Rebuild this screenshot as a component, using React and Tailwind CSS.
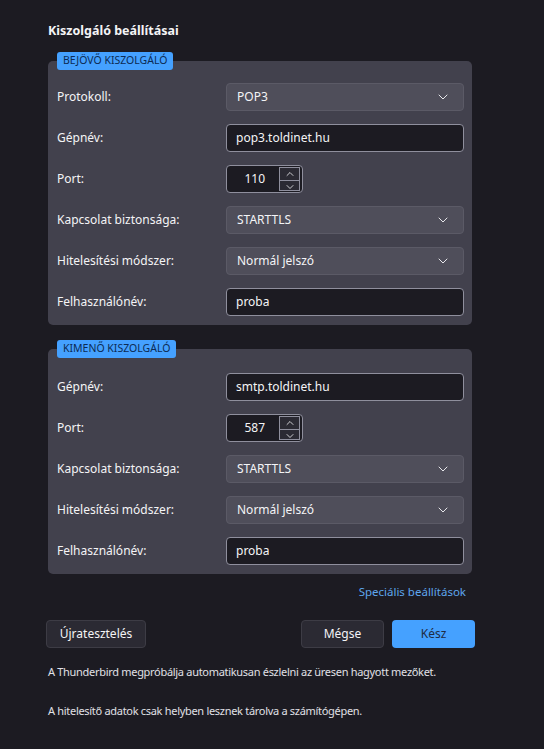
import { ChevronDown, ChevronUp } from "lucide-react";

function Select({ value }) {
  return (
    <div className="flex h-[28px] w-[238px] items-center justify-between rounded-[4px] border border-[#5b5a66] bg-[#4f4e5a] pl-[10px] pr-[12px] text-[12px] text-[#f4f4f6]">
      <span>{value}</span>
      <ChevronDown size={16} strokeWidth={1.5} className="text-[#e8e8ec]" />
    </div>
  );
}

function TextInput({ value }) {
  return (
    <div className="flex h-[28px] w-[238px] items-center rounded-[4px] border border-[#8f8f9d] bg-[#1c1b22] px-[9px] text-[12px] text-[#f4f4f6]">
      {value}
    </div>
  );
}

function PortInput({ value }) {
  return (
    <div className="flex h-[28px] w-[77px] items-center rounded-[4px] border border-[#8f8f9d] bg-[#1c1b22] text-[12px] text-[#f4f4f6]">
      <span className="flex-1 pr-[14px] text-right">{value}</span>
      <div className="mr-[2px] flex h-[24px] w-[21px] flex-col border border-[#8f8f9d] bg-[#2b2a33]">
        <div className="flex flex-1 items-center justify-center border-b border-[#8f8f9d]">
          <ChevronUp size={12} strokeWidth={1.6} />
        </div>
        <div className="flex flex-1 items-center justify-center">
          <ChevronDown size={12} strokeWidth={1.6} />
        </div>
      </div>
    </div>
  );
}

function Row({ label, children }) {
  return (
    <div className="flex items-center">
      <div className="w-[169px] text-[12px] text-[#f4f4f6]">{label}</div>
      {children}
    </div>
  );
}

function Panel({ title, children, top }) {
  return (
    <div className="relative">
      <div className="absolute left-[9px] top-[-9px] flex h-[18px] items-center rounded-[3px] bg-[#45a1ff] px-[6px] text-[10.5px] text-[#0c2b54]">
        {title}
      </div>
      <div className={`flex flex-col gap-[13px] rounded-[5px] bg-[#42414d] pb-[9px] pl-[9px] pr-[8px] ${top}`}>
        {children}
      </div>
    </div>
  );
}

export default function App() {
  return (
    <div
      className="min-h-screen bg-[#1c1b22] px-[48px] pt-[22px] text-[#f4f4f6]"
      style={{ fontFamily: '"Noto Sans", "Open Sans", sans-serif' }}
    >
      <div className="w-[424px]">
        <h1 className="text-[12.5px] font-bold leading-[18px]">Kiszolgáló beállításai</h1>

        <div className="mt-[21px]">
          <Panel title="BEJÖVŐ KISZOLGÁLÓ" top="pt-[22px]">
            <Row label="Protokoll:"><Select value="POP3" /></Row>
            <Row label="Gépnév:"><TextInput value="pop3.toldinet.hu" /></Row>
            <Row label="Port:"><PortInput value="110" /></Row>
            <Row label="Kapcsolat biztonsága:"><Select value="STARTTLS" /></Row>
            <Row label="Hitelesítési módszer:"><Select value="Normál jelszó" /></Row>
            <Row label="Felhasználónév:"><TextInput value="proba" /></Row>
          </Panel>
        </div>

        <div className="mt-[24px]">
          <Panel title="KIMENŐ KISZOLGÁLÓ" top="pt-[24px]">
            <Row label="Gépnév:"><TextInput value="smtp.toldinet.hu" /></Row>
            <Row label="Port:"><PortInput value="587" /></Row>
            <Row label="Kapcsolat biztonsága:"><Select value="STARTTLS" /></Row>
            <Row label="Hitelesítési módszer:"><Select value="Normál jelszó" /></Row>
            <Row label="Felhasználónév:"><TextInput value="proba" /></Row>
          </Panel>
        </div>

        <div className="mt-[9px] flex justify-end pr-[6px] text-[11.5px] text-[#5ea6ee]">
          Speciális beállítások
        </div>

        <div className="ml-[-2px] mr-[-3px] mt-[20px] flex items-center">
          <button className="h-[28px] w-[100px] rounded-[4px] border border-[#3d3c45] bg-[#2b2a33] text-[12px] text-[#f4f4f6]">
            Újratesztelés
          </button>
          <div className="flex-1" />
          <button className="h-[28px] w-[83px] rounded-[4px] border border-[#3d3c45] bg-[#2b2a33] text-[12px] text-[#f4f4f6]">
            Mégse
          </button>
          <button className="ml-[8px] h-[28px] w-[83px] rounded-[4px] bg-[#45a1ff] text-[12px] text-[#1f2c44]">
            Kész
          </button>
        </div>

        <p className="mt-[16px] whitespace-nowrap text-[11px] leading-[16px] tracking-[-0.3px] text-[#e0e0e6]">
          A Thunderbird megpróbálja automatikusan észlelni az üresen hagyott mezőket.
        </p>
        <p className="mt-[23px] whitespace-nowrap text-[11px] leading-[16px] tracking-[-0.3px] text-[#e0e0e6]">
          A hitelesítő adatok csak helyben lesznek tárolva a számítógépen.
        </p>
      </div>
    </div>
  );
}
